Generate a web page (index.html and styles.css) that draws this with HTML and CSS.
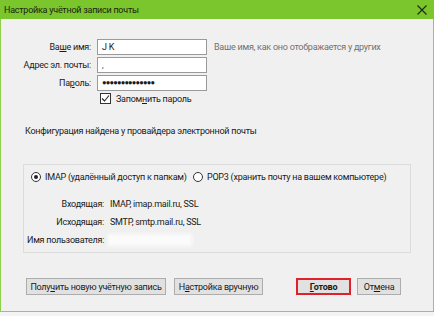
FILE: index.html
```html
<!DOCTYPE html>
<html lang="ru">
<head>
    <meta charset="utf-8" />
    <title>Настройка учётной записи почты</title>
    <link rel="stylesheet" href="styles.css">
</head>
<body>

<div class="window">

    <div class="titlebar">
        <span class="title">Настройка учётной записи почты</span>
        <svg class="close" width="10" height="10" viewBox="0 0 10 10">
            <path d="M0.5 0.5 L9.5 9.5 M9.5 0.5 L0.5 9.5" stroke="#1d2a10" stroke-width="1.1" fill="none"/>
        </svg>
    </div>

    <div class="content">

        <div class="fields">
            <label class="lbl">Ва<u>ш</u>е имя:</label>
            <div class="input">J K</div>
            <span class="hint">Ваше имя, как оно отображается у других</span>

            <label class="lbl">Адрес эл. почты:</label>
            <div class="input"><span class="blur">,&nbsp;&nbsp;&nbsp;&nbsp;&nbsp;&nbsp;&nbsp;&nbsp;&nbsp;</span></div>
            <span></span>

            <label class="lbl">Па<u>р</u>оль:</label>
            <div class="input dots">●●●●●●●●●●●●●●</div>
            <span></span>

            <span></span>
            <div class="check-row">
                <span class="checkbox">
                    <svg width="9" height="9" viewBox="0 0 9 9">
                        <path d="M1 4.5 L3.5 7 L8 1.5" stroke="#222" stroke-width="1.1" fill="none"/>
                    </svg>
                </span>
                <span>Запом<u>н</u>ить пароль</span>
            </div>
        </div>

        <p class="found">Конфигурация найдена у провайдера электронной почты</p>

        <div class="group">
            <div class="radios">
                <span class="radio-item imap"><span class="radio on"></span>IMAP (удалённый доступ к папкам)</span>
                <span class="radio-item"><span class="radio"></span>POP3 (хранить почту на вашем компьютере)</span>
            </div>

            <div class="info">
                <span class="info-lbl">Входящая:</span>
                <span>IMAP, imap.mail.ru, SSL</span>
                <span class="info-lbl">Исходящая:</span>
                <span>SMTP, smtp.mail.ru, SSL</span>
                <span class="info-lbl">Имя пользователя:</span>
                <span class="smudge"></span>
            </div>
        </div>

        <div class="buttons">
            <button class="btn new">Полу<u>ч</u>ить новую учётную запись</button>
            <button class="btn manual">Н<u>а</u>стройка вручную</button>
            <span class="spacer"></span>
            <button class="btn done"><u>Г</u>отово</button>
            <button class="btn cancel">От<u>м</u>ена</button>
        </div>

    </div>
</div>

</body>
</html>
```

FILE: styles.css
```css
body{
    margin: 0;
    background: #f4f4f4;
    font-family: Roboto, "Noto Sans", sans-serif;
    font-size: 9px;
    letter-spacing: -0.25px;
    color: #1a1a1a;
    white-space: nowrap;
}

u{
    text-decoration: underline;
    text-underline-offset: 1px;
}

.window{
    width: 434px;
    height: 312px;
    box-sizing: border-box;
    background: #f0f0f0;
    border: 1px solid #8fd04a;
    border-top: none;
    display: flex;
    flex-direction: column;
}

.titlebar{
    height: 19px;
    background: #7bc62d;
    margin: 0 -1px;
    display: flex;
    align-items: center;
    justify-content: space-between;
    padding: 0 7px 0 4px;
}

.title{
    color: #1a2410;
    font-size: 9px;
}

.content{
    flex: 1;
    display: flex;
    flex-direction: column;
}

/* top form */

.fields{
    display: grid;
    grid-template-columns: 90px 110px auto;
    column-gap: 6px;
    row-gap: 2px;
    margin-top: 20px;
    align-items: center;
}

.lbl{
    text-align: right;
}

.input{
    height: 16px;
    box-sizing: border-box;
    background: #fff;
    border: 1px solid #9a9a9a;
    padding: 0 4px;
    line-height: 14px;
}

.dots{
    font-size: 7.5px;
    letter-spacing: -0.8px;
}

.blur{
    color: #555;
    filter: blur(0.6px);
}

.hint{
    color: #707070;
    padding-left: 1px;
}

.check-row{
    grid-column: 2 / 4;
    display: flex;
    align-items: center;
    gap: 5px;
    height: 11px;
    padding-left: 3px;
}

.checkbox{
    width: 9px;
    height: 9px;
    border: 1px solid #333;
    background: #fff;
    display: flex;
}

.found{
    margin: 20px 0 0 24px;
    line-height: 14px;
}

/* group box */

.group{
    margin: 26px 22px 0 22px;
    height: 89px;
    box-sizing: border-box;
    border: 1px solid #dcdcdc;
    padding: 5px 0 0 3px;
}

.radios{
    display: flex;
    height: 14px;
    align-items: center;
    margin-left: 4px;
}

.radio-item{
    display: flex;
    align-items: center;
    gap: 4px;
}

.imap{
    width: 162px;
}

.radio{
    flex-shrink: 0;
    width: 8px;
    height: 8px;
    border: 1px solid #333;
    border-radius: 50%;
    background: #fff;
    position: relative;
}

.radio.on::after{
    content: "";
    position: absolute;
    left: 2px;
    top: 2px;
    width: 4px;
    height: 4px;
    border-radius: 50%;
    background: #222;
}

.info{
    display: grid;
    grid-template-columns: 77px auto;
    column-gap: 6px;
    row-gap: 4px;
    margin-top: 13px;
    align-items: center;
}

.info span{
    line-height: 14px;
}

.info-lbl{
    text-align: right;
}

.smudge{
    width: 80px;
    height: 8px;
    background: #fbfbfb;
    box-shadow: 0 0 3px 2px #fbfbfb;
}

/* bottom buttons */

.buttons{
    display: flex;
    align-items: center;
    margin: 25px 0 0 25px;
}

.spacer{
    width: 33px;
}

.btn{
    height: 17px;
    box-sizing: border-box;
    background: #e1e1e1;
    border: 1px solid #adadad;
    font-family: inherit;
    font-size: 9px;
    letter-spacing: -0.25px;
    color: #1a1a1a;
    padding: 0;
    line-height: 14px;
    white-space: nowrap;
}

.new{
    width: 140px;
}

.manual{
    width: 89px;
    margin-left: 8px;
}

.done{
    width: 55px;
    font-weight: bold;
    border: 2px solid #e0212c;
}

.cancel{
    width: 44px;
    margin-left: 6px;
}
```
